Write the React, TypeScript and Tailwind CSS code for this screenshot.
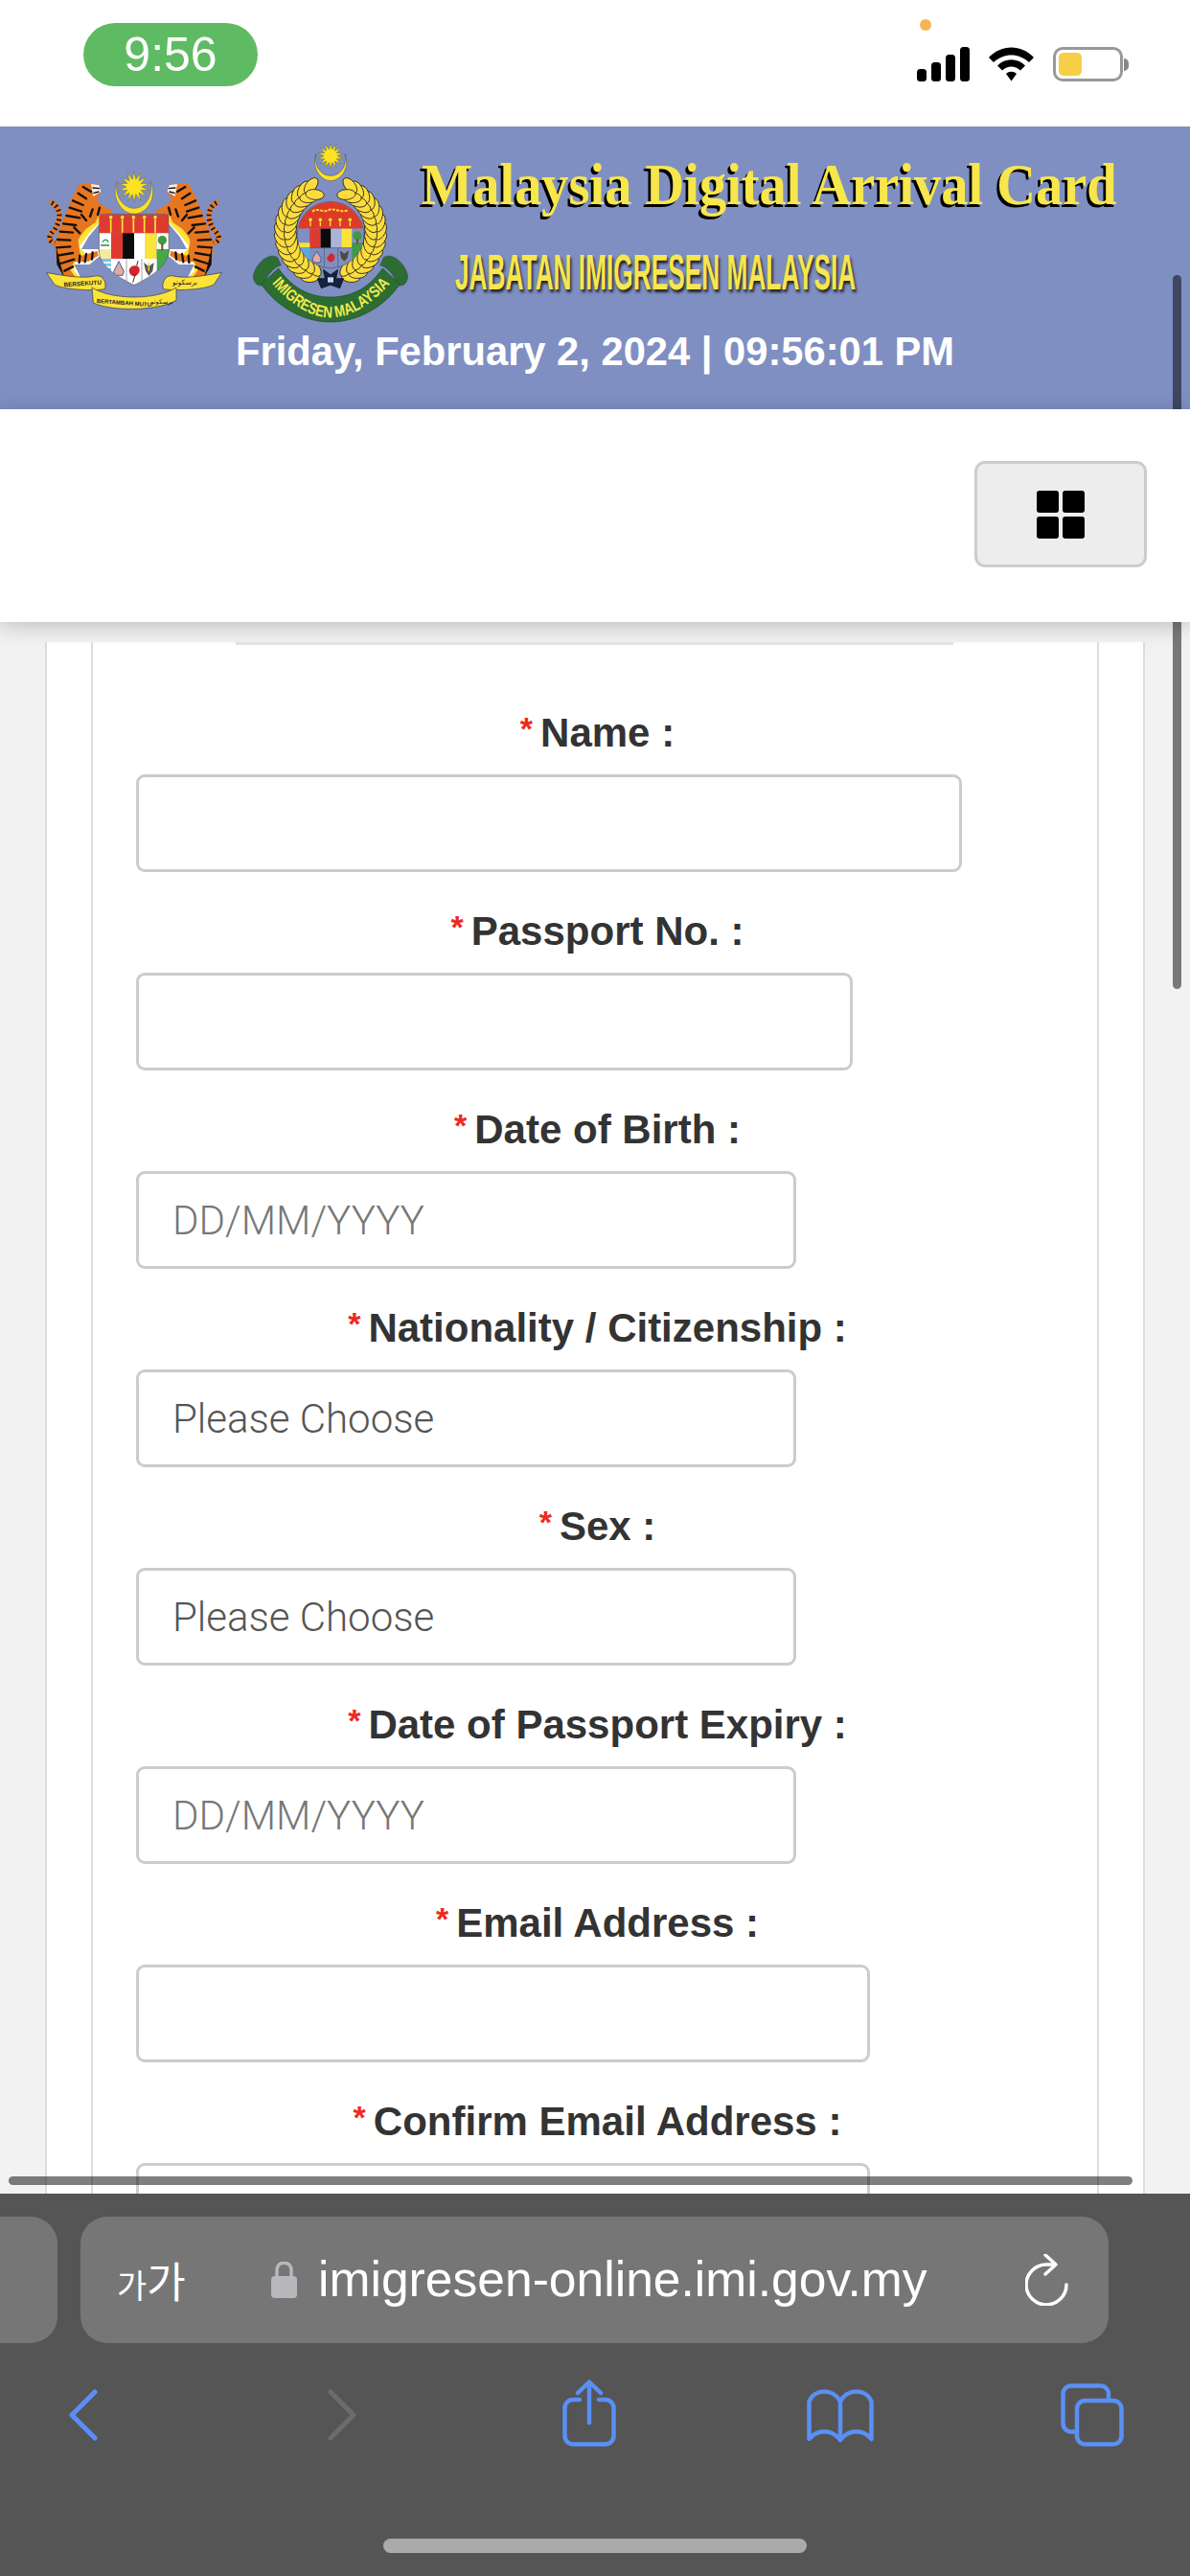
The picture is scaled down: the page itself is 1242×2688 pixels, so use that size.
import React from 'react'

const fields = [
  { label: 'Name :', width: 'w-[862px]' },
  { label: 'Passport No. :', width: 'w-[748px]' },
  { label: 'Date of Birth :', width: 'w-[689px]', placeholder: 'DD/MM/YYYY' },
  { label: 'Nationality / Citizenship :', width: 'w-[689px]', choose: true },
  { label: 'Sex :', width: 'w-[689px]', choose: true },
  { label: 'Date of Passport Expiry :', width: 'w-[689px]', placeholder: 'DD/MM/YYYY' },
  { label: 'Email Address :', width: 'w-[766px]' },
  { label: 'Confirm Email Address :', width: 'w-[766px]' },
]

function starPoints(cx: number, cy: number, outer: number, inner: number, n = 14) {
  const pts: string[] = []
  for (let i = 0; i < n * 2; i++) {
    const r = i % 2 === 0 ? outer : inner
    const a = (Math.PI * i) / n - Math.PI / 2
    pts.push(`${cx + r * Math.cos(a)},${cy + r * Math.sin(a)}`)
  }
  return pts.join(' ')
}

function Tiger() {
  const stripes = [
    'M140 135 L165 150', 'M125 155 L150 172', 'M108 178 L140 192', 'M98 200 L135 212', 'M88 225 L130 232',
    'M78 250 L118 255', 'M68 275 L108 278', 'M60 300 L100 302', 'M58 325 L100 322', 'M60 350 L108 342',
    'M70 375 L112 362', 'M82 398 L108 385', 'M170 205 L162 228', 'M192 200 L186 222', 'M150 240 L135 222',
    'M130 280 L112 262', 'M150 345 L146 370', 'M130 350 L128 372', 'M170 340 L168 362',
  ]
  return (
    <g>
      <path d="M42 185 C72 200 72 240 50 270 C30 290 30 305 52 310" fill="none" stroke="#e8761f" strokeWidth="15" strokeLinecap="round" />
      <path d="M42 185 C72 200 72 240 50 270 C30 290 30 305 52 310" fill="none" stroke="#111" strokeWidth="15" strokeDasharray="5 10" />
      <path d="M150 215 L190 222 L196 245 L158 290 L135 330 L188 330 L192 352 L160 378 L112 378 L128 410 L135 425 L95 425 L100 400 L130 300 Z" fill="#fff" />
      <path d="M160 190 L195 200 L205 232 L158 282 L128 322 L150 350 L188 334 L186 350 L150 370 L115 370 L112 398 L135 422 L98 418 L100 385 Z" fill="#fce33a" />
      <path d="M130 124 L188 128 L196 148 L182 178 L205 195 L233 210 L228 220 L190 220 L180 245 L148 268 L124 300 L132 352 L184 336 L188 350 L158 368 L112 370 L100 395 L120 422 L82 420 L58 378 L52 320 L66 268 L90 210 L108 165 Z" fill="#e8761f" />
      <path d="M165 126 L190 130 L196 150 L172 165 Z" fill="#f5f0e6" />
      <path d="M170 138 L192 140 M172 155 L190 150" stroke="#111" strokeWidth="4" fill="none" />
      {stripes.map((d) => (
        <path key={d} d={d} stroke="#111" strokeWidth="7" fill="none" strokeLinecap="round" />
      ))}
      <path d="M56 320 L58 378 L82 420 L70 380 Z" fill="#111" />
    </g>
  )
}

function NationalArms() {
  return (
    <svg viewBox="0 0 600 540" className="w-[200px] h-[180px] shrink-0">
      <polygon points={starPoints(300, 135, 48, 24)} fill="#fce21f" stroke="#6b6a3c" strokeWidth="1.5" />
      <path d="M246 118 C226 172 264 220 300 220 C338 220 374 172 352 118 C360 165 334 202 300 202 C266 202 238 165 246 118 Z" fill="#fbe02a" stroke="#5d5c4a" strokeWidth="1.5" />
      <Tiger />
      <g transform="translate(600 0) scale(-1 1)">
        <Tiger />
      </g>
      <clipPath id="armsShield">
        <path d="M190 220 H408 V335 C408 385 345 420 300 442 C255 420 190 385 190 335 Z" />
      </clipPath>
      <g clipPath="url(#armsShield)">
        <rect x="190" y="220" width="218" height="60" fill="#df3a30" />
        <rect x="190" y="280" width="38" height="50" fill="#fff" />
        <rect x="190" y="330" width="38" height="30" fill="#f5e9a0" />
        <rect x="228" y="280" width="36" height="80" fill="#df3a30" />
        <rect x="264" y="280" width="36" height="80" fill="#0b0b0b" />
        <rect x="300" y="280" width="35" height="80" fill="#fff" />
        <rect x="335" y="280" width="36" height="80" fill="#fce33a" />
        <rect x="371" y="280" width="37" height="50" fill="#fff" />
        <rect x="371" y="330" width="37" height="110" fill="#45a84a" />
        <rect x="190" y="360" width="38" height="90" fill="#7cc3e8" />
        <path d="M190 372 H228 M190 386 H228 M190 400 H228 M190 414 H228" stroke="#fff" strokeWidth="5" />
        <rect x="228" y="360" width="143" height="90" fill="#fff" />
        <path d="M276 360 V450 M324 360 V450" stroke="#777" strokeWidth="2" />
        <path d="M236 400 L252 368 L268 400 L264 412 H240 Z" fill="#e8a6a0" stroke="#2a68a8" strokeWidth="3" />
        <path d="M300 382 C318 378 322 398 312 408 C305 418 290 416 286 404 C280 392 290 384 300 382 Z" fill="#d9232b" />
        <path d="M304 408 L296 434 M308 382 L312 366" stroke="#333" strokeWidth="3" />
        <path d="M330 372 L346 384 L362 372 L358 398 L346 414 L336 398 Z" fill="#5d5a50" />
        <path d="M346 372 V398" stroke="#f2d23a" strokeWidth="4" />
        <circle cx="388" cy="302" r="14" fill="#3f9a43" />
        <rect x="385" y="312" width="6" height="22" fill="#7a4a25" />
        <path d="M195 318 H222 M200 308 C208 298 214 298 220 308" stroke="#2f8a45" strokeWidth="4" fill="none" />
      </g>
      <path d="M190 220 H408 V335 C408 385 345 420 300 442 C255 420 190 385 190 335 Z" fill="none" stroke="#555" strokeWidth="1.5" />
      {[227, 263, 298, 332, 366].map((x) => (
        <g key={x}>
          <path d={`M${x} 232 V278`} stroke="#fce33a" strokeWidth="5" />
          <circle cx={x} cy={230} r="6" fill="#fce33a" stroke="#555" strokeWidth="1" />
        </g>
      ))}
      <path d="M26 404 C60 408 130 425 178 414 C205 408 215 440 208 455 C160 462 70 455 50 440 Z" fill="#fce33a" stroke="#333" strokeWidth="2" />
      <path d="M574 404 C540 408 470 425 422 414 C395 408 385 440 392 455 C440 462 530 455 550 440 Z" fill="#fce33a" stroke="#333" strokeWidth="2" />
      <path d="M168 450 C230 490 370 490 432 450 L432 490 C370 525 230 525 172 498 Z" fill="#fce33a" stroke="#333" strokeWidth="2" />
      <text x="80" y="448" fontSize="19" fontWeight="700" fill="#222" transform="rotate(-4 80 448)" className="font-['Liberation_Sans',sans-serif]">BERSEKUTU</text>
      <text x="182" y="498" fontSize="18" fontWeight="700" fill="#222" transform="rotate(4 182 498)" className="font-['Liberation_Sans',sans-serif]">BERTAMBAH MUTU</text>
      <text x="352" y="500" fontSize="20" fill="#222" className="font-['DejaVu_Sans',sans-serif]">برسکوتو</text>
      <text x="420" y="442" fontSize="22" fill="#222" className="font-['DejaVu_Sans',sans-serif]">برسکوتو</text>
    </svg>
  )
}

function wreathLeaves() {
  const out: { x: number; y: number; rot: number }[] = []
  for (let t = 24; t <= 160; t += 9.5) {
    const th = (t * Math.PI) / 180
    const base = (Math.atan2(-Math.sin(th), -Math.cos(th)) * 180) / Math.PI
    ;[
      { r: 156, tilt: -28 },
      { r: 126, tilt: 28 },
    ].forEach(({ r, tilt }) => {
      out.push({ x: -r * Math.sin(th), y: r * Math.cos(th), rot: base + tilt })
    })
  }
  return out
}

function ImmigrationCrest() {
  const leaves = wreathLeaves()
  return (
    <svg viewBox="0 0 600 600" className="w-[200px] h-[200px] shrink-0 ml-[10px]">
      <polygon points={starPoints(285, 68, 40, 21)} fill="#fce21f" stroke="#6b6a3c" strokeWidth="1.5" />
      <path d="M240 62 C224 108 256 146 285 146 C316 146 348 108 330 62 C338 100 316 130 285 130 C256 130 232 100 240 62 Z" fill="#fbe02a" stroke="#444" strokeWidth="1.5" />
      <g transform="translate(285 305)">
        {leaves.map((l, i) => (
          <g key={i}>
            <ellipse cx={l.x} cy={l.y} rx="29" ry="16" fill="#fbdc3c" stroke="#222" strokeWidth="2.500" transform={`rotate(${l.rot} ${l.x} ${l.y})`} />
            <ellipse cx={-l.x} cy={l.y} rx="29" ry="16" fill="#fbdc3c" stroke="#222" strokeWidth="2.500" transform={`rotate(${180 - l.rot} ${-l.x} ${l.y})`} />
          </g>
        ))}
      </g>
      <circle cx="285" cy="315" r="104" fill="#7f8fc2" stroke="#4f4f5f" strokeWidth="2" />
      <clipPath id="crestClip">
        <circle cx="285" cy="315" r="103" />
      </clipPath>
      <g clipPath="url(#crestClip)">
        <rect x="180" y="210" width="210" height="86" fill="#df3a26" />
        <rect x="180" y="296" width="40" height="60" fill="#7f8fc2" />
        <rect x="220" y="296" width="34" height="60" fill="#df3a30" />
        <rect x="254" y="296" width="32" height="60" fill="#0b0b0b" />
        <rect x="286" y="296" width="33" height="60" fill="#a9b4d8" />
        <rect x="319" y="296" width="33" height="60" fill="#fce33a" />
        <rect x="352" y="296" width="38" height="60" fill="#7f8fc2" />
        <rect x="352" y="340" width="38" height="70" fill="#3f9a43" />
        <rect x="180" y="340" width="40" height="14" fill="#fce33a" />
        <rect x="180" y="354" width="40" height="50" fill="#5ba8dc" />
        <path d="M265 356 V420 M308 356 V420 M220 356 H352" stroke="#555" strokeWidth="2" />
        <path d="M228 390 L242 366 L256 390 L252 402 H232 Z" fill="#e8a6a0" stroke="#2a68a8" strokeWidth="3" />
        <path d="M284 374 C300 372 302 392 292 398 C282 404 272 394 274 386 Z" fill="#d9232b" />
        <path d="M314 364 L328 374 L342 364 L338 388 L328 398 L318 388 Z" fill="#4d4a40" />
        <circle cx="369" cy="318" r="14" fill="#3f9a43" />
        <rect x="366" y="328" width="6" height="16" fill="#7a4a25" />
      </g>
      <path d="M228 242 C245 228 262 248 278 238 C295 228 312 248 342 238" stroke="#fbdc3c" strokeWidth="6" fill="none" strokeDasharray="9 4" />
      {[222, 253, 284, 315, 346].map((x) => (
        <g key={x}>
          <path d={`M${x} 268 V288`} stroke="#fce33a" strokeWidth="4" />
          <circle cx={x} cy={268} r="6" fill="#fce33a" stroke="#6b3a1a" strokeWidth="1" />
        </g>
      ))}
      <path d="M43 445 C50 405 90 370 118 385 L130 410 C105 415 85 445 75 472 C60 478 45 470 43 445 Z" fill="#2c6d32" stroke="#3a4a5a" strokeWidth="2" />
      <path d="M527 445 C520 405 480 370 452 385 L440 410 C465 415 485 445 495 472 C510 478 525 470 527 445 Z" fill="#2c6d32" stroke="#3a4a5a" strokeWidth="2" />
      <path d="M68 470 L122 420 C170 490 230 510 285 510 C340 510 400 490 448 420 L502 470 C450 545 365 588 285 588 C205 588 120 545 68 470 Z" fill="#2c6d32" stroke="#1f4e26" strokeWidth="2" />
      <path id="crestArc" d="M92 456 C160 538 225 574 285 574 C345 574 412 538 482 456" fill="none" />
      <text fontSize="50" fontWeight="700" fill="#f3ea4e" className="font-['Liberation_Sans',sans-serif]">
        <textPath href="#crestArc" startOffset="3%" textLength="440" lengthAdjust="spacingAndGlyphs">IMIGRESEN MALAYSIA</textPath>
      </text>
      <path d="M285 440 L262 424 L268 452 L244 452 L256 482 L285 472 L314 482 L326 452 L302 452 L308 424 Z" fill="#14233f" stroke="#0a0a0a" strokeWidth="2" />
      <rect x="276" y="448" width="18" height="16" fill="#c9d2e8" />
    </svg>
  )
}

function StatusIcons() {
  return (
    <div className="relative flex items-center gap-[20px] mr-[64px] mt-[49px]">
      <span className="absolute left-[3px] top-[-29px] w-[12px] h-[12px] rounded-full bg-[#f5b556]" />
      <svg viewBox="0 0 55 36" className="w-[55px] h-[36px]">
        <rect x="0" y="23" width="10" height="13" rx="3.5" fill="#000" />
        <rect x="15" y="16" width="10" height="20" rx="3.5" fill="#000" />
        <rect x="30" y="8" width="10" height="28" rx="3.5" fill="#000" />
        <rect x="45" y="0" width="10" height="36" rx="3.5" fill="#000" />
      </svg>
      <svg viewBox="0 0 47 36" className="w-[47px] h-[36px]">
        <path d="M0 11 C13 -3 34 -3 47 11 L42 16 C31 6 16 6 5 16 Z" fill="#000" />
        <path d="M9 19.5 C17 11 30 11 38 19.5 L33 24.5 C27 19 20 19 14 24.5 Z" fill="#000" />
        <path d="M18 28 C21 25 26 25 29 28 L23.5 35.5 Z" fill="#000" />
      </svg>
      <div className="flex items-center">
        <div className="w-[73px] h-[36px] rounded-[10px] border-[3px] border-[#999] p-[3px]">
          <div className="w-[24px] h-full rounded-[5px] bg-[#f7ce46]" />
        </div>
        <span className="w-[5px] h-[13px] rounded-r-full bg-[#888] ml-[1px]" />
      </div>
    </div>
  )
}

function FieldRow({ field }: { field: (typeof fields)[number] }) {
  return (
    <div>
      <div className="h-[58px] mb-[15px] flex items-center justify-center ml-[5px]">
        <span className="text-[#ee2a1c] text-[34px] leading-none font-bold mr-[8px] -mt-[8px]">*</span>
        <label className="text-[#333] text-[42px] font-bold">{field.label}</label>
      </div>
      {field.choose ? (
        <select className={`block ${field.width} ml-[45px] h-[102px] rounded-[9px] border-[3px] border-[#ccc] bg-white px-[35px] text-[42px] font-['Roboto',sans-serif] font-light text-[#555] appearance-none`}>
          <option>Please Choose</option>
        </select>
      ) : (
        <input
          placeholder={field.placeholder}
          className={`block ${field.width} ml-[45px] h-[102px] rounded-[9px] border-[3px] border-[#ccc] bg-white px-[35px] text-[42px] font-['Roboto',sans-serif] font-light placeholder:text-[#777] placeholder:opacity-100`}
        />
      )}
    </div>
  )
}

export default function App() {
  return (
    <div className="relative w-[1242px] h-[2688px] overflow-hidden flex flex-col bg-[#f2f2f2] font-['Liberation_Sans',sans-serif]">
      {/* status bar */}
      <div className="h-[132px] bg-white flex justify-between items-start shrink-0">
        <div className="ml-[87px] mt-[24px] w-[182px] h-[66px] rounded-[33px] bg-[#5fbb63] text-white text-[50px] flex items-center justify-center">
          9:56
        </div>
        <StatusIcons />
      </div>

      {/* site header */}
      <header className="h-[295px] bg-[#7f8fc2] shrink-0">
        <div className="h-[212px] flex items-start pl-[40px] pt-[8px]">
          <div className="mt-[10px]">
            <NationalArms />
          </div>
          <ImmigrationCrest />
          <div className="-ml-[10px] whitespace-nowrap">
            <div className="mt-[22px] h-[60px] origin-left scale-x-[0.91] font-['Liberation_Serif',serif] font-bold text-[62px] leading-[60px] text-[#f7e64c] [text-shadow:-3px_3px_0_#000]">
              Malaysia Digital Arrival Card
            </div>
            <div className="mt-[37px] ml-[35px] origin-left scale-x-[0.505] font-bold text-[52px] leading-[50px] text-[#f7e64c] [text-shadow:3px_3px_4px_#222]">
              JABATAN IMIGRESEN MALAYSIA
            </div>
          </div>
        </div>
        <div className="text-center text-white font-bold text-[41.700px] leading-[46px]">
          Friday, February 2, 2024 | 09:56:01 PM
        </div>
      </header>

      {/* nav bar */}
      <div className="relative z-10 h-[222px] bg-white shrink-0 shadow-[0_4px_22px_rgba(0,0,0,0.22)] flex justify-end items-start">
        <button className="mt-[54px] mr-[45px] w-[180px] h-[111px] rounded-[11px] border-[3px] border-[#ccc] bg-[#ededed] flex items-center justify-center">
          <span className="grid grid-cols-2 gap-[4px]">
            <span className="w-[23px] h-[23px] rounded-[3px] bg-black" />
            <span className="w-[23px] h-[23px] rounded-[3px] bg-black" />
            <span className="w-[23px] h-[23px] rounded-[3px] bg-black" />
            <span className="w-[23px] h-[23px] rounded-[3px] bg-black" />
          </span>
        </button>
      </div>

      {/* form */}
      <main className="flex-1 min-h-0 overflow-hidden px-[47px]">
        <div className="h-full bg-white border-x-[2px] border-[#ddd] px-[46px]">
          <div className="h-full border-x-[2px] border-[#ddd]">
            <div className="h-[3px] bg-[#e5e5e5] mt-[21px] ml-[149px] mr-[150px]" />
            <div className="mt-[62px] flex flex-col gap-[32px]">
              {fields.map((f) => (
                <FieldRow key={f.label} field={f} />
              ))}
            </div>
          </div>
        </div>
      </main>

      {/* safari toolbar */}
      <div className="h-[399px] bg-[#555] shrink-0">
        <div className="pt-[24px] flex gap-[24px]">
          <div className="w-[60px] h-[132px] rounded-r-[28px] bg-[#767676]" />
          <div className="w-[1073px] h-[132px] rounded-[28px] bg-[#767676] flex items-center text-white">
            <span className="ml-[38px] w-[73px] flex items-baseline font-['Noto_Sans_CJK_KR',sans-serif]">
              <span className="text-[34px] leading-none">가</span>
              <span className="text-[44px] leading-none">가</span>
            </span>
            <svg viewBox="0 0 27 38" className="ml-[88px] w-[27px] h-[38px]">
              <path d="M6 16 V9 C6 -1.5 21 -1.5 21 9 V16" fill="none" stroke="#b8b8bc" strokeWidth="3.5" />
              <rect x="0" y="15" width="27" height="23" rx="4" fill="#b8b8bc" />
            </svg>
            <span className="ml-[22px] w-[634px] text-[51.600px] whitespace-nowrap">imigresen-online.imi.gov.my</span>
            <svg viewBox="0 0 46 54" className="ml-[104px] w-[46px] h-[54px]" fill="none" stroke="#fff" strokeWidth="3.5" strokeLinecap="round" strokeLinejoin="round">
              <path d="M43 32 A21 21 0 1 1 22 11 H31" />
              <path d="M21 1 L32 11 L21 21" />
            </svg>
          </div>
        </div>
        <div className="mt-[38px] pl-[72px] flex items-start">
          <svg viewBox="0 0 30 54" className="mt-[10px] w-[30px] h-[54px]" fill="none" stroke="#5a90f5" strokeWidth="5" strokeLinecap="round" strokeLinejoin="round">
            <path d="M27 3 L3 27 L27 51" />
          </svg>
          <svg viewBox="0 0 30 54" className="ml-[240px] mt-[10px] w-[30px] h-[54px]" fill="none" stroke="#6c6c6c" strokeWidth="5" strokeLinecap="round" strokeLinejoin="round">
            <path d="M3 3 L27 27 L3 51" />
          </svg>
          <svg viewBox="0 0 56 70" className="ml-[215px] w-[56px] h-[70px]" fill="none" stroke="#5a90f5" strokeWidth="4.5" strokeLinecap="round" strokeLinejoin="round">
            <path d="M18 21 H11 A8.500 8.500 0 0 0 2.500 29.500 V59 A8.500 8.500 0 0 0 11 67.500 H45 A8.500 8.500 0 0 0 53.500 59 V29.500 A8.500 8.500 0 0 0 45 21 H38" />
            <path d="M28 45 V3 M16 14 L28 2.500 L40 14" />
          </svg>
          <svg viewBox="0 0 70 57" className="ml-[199px] mt-[9px] w-[70px] h-[57px]" fill="none" stroke="#5a90f5" strokeWidth="4.5" strokeLinecap="round" strokeLinejoin="round">
            <path d="M35 54 V14 C28 0 8 0 2.500 14 V53 C12 42 26 43 35 54 C44 43 58 42 67.500 53 V14 C62 0 42 0 35 14" />
          </svg>
          <svg viewBox="0 0 66 66" className="ml-[195px] mt-[4px] w-[66px] h-[66px]" fill="none" stroke="#5a90f5" strokeWidth="4.5" strokeLinecap="round" strokeLinejoin="round">
            <path d="M50 18 V11 A8.500 8.500 0 0 0 41.500 2.500 H11 A8.500 8.500 0 0 0 2.500 11 V42 A8.500 8.500 0 0 0 11 50.500 H17" />
            <rect x="17" y="18" width="46.500" height="45.500" rx="8.500" />
          </svg>
        </div>
        <div className="mt-[96px] mx-auto w-[442px] h-[15px] rounded-full bg-[#aaa]" />
      </div>

      {/* overlay scrollbars */}
      <div className="absolute left-[1224px] top-[287px] w-[9px] h-[745px] rounded-full bg-black/50" />
      <div className="absolute left-[9px] top-[2271px] w-[1173px] h-[9px] rounded-full bg-black/50" />
    </div>
  )
}
